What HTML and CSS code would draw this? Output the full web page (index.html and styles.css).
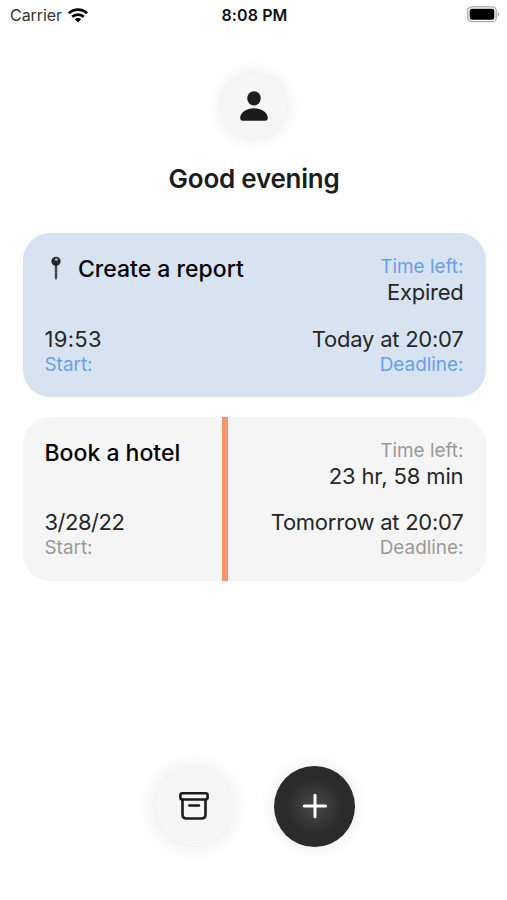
FILE: index.html
```html
<!DOCTYPE html>
<html lang="en">
<head>
<meta charset="utf-8">
<meta name="viewport" content="width=device-width">
<title>Tasks</title>
<link rel="stylesheet" href="styles.css">
</head>
<body>
<main class="screen">
  <header class="status">
    <div class="carrier"><span>Carrier</span>
      <svg width="20" height="15" viewBox="0 0 20 15"><g fill="none" stroke="#000" stroke-width="2.7"><path d="M.9 5.3C6 .4 14 .4 19.1 5.3"/><path d="M4.2 8.8c3.2-3 8.4-3 11.6 0"/></g><path d="M6.8 11.3c1.8-1.6 4.6-1.6 6.4 0L10 14.5Z"/></svg>
    </div>
    <div class="clock">8:08 PM</div>
    <svg class="battery" width="33" height="17" viewBox="0 0 33 17"><rect x=".8" y=".8" width="28.4" height="14.9" rx="4" fill="#fff" stroke="#aaa" stroke-width="1.3"/><rect x="2.7" y="2.8" width="24.6" height="10.9" rx="2.2"/><path d="M30.7 6v4.8q1.5-.7 1.5-2.4T30.7 6Z" fill="#aaa"/></svg>
  </header>
  <div class="avatar">
    <svg width="30" height="30" viewBox="0 0 30 30" fill="#1c1c1c"><ellipse cx="15" cy="7.4" rx="6.7" ry="7.2"/><path d="M1.2 27.1C1.2 21.5 7.5 17.3 15 17.3s13.8 4.2 13.8 9.8q0 2.7-2.8 2.7H4q-2.8 0-2.8-2.7Z"/></svg>
  </div>
  <h1 class="greeting">Good evening</h1>
  <section class="tasks">
    <article class="card card-blue">
      <h2 class="title"><svg class="pin" width="12" height="26" viewBox="0 0 12 26"><path d="M4.8 8h2.4v14L6 24.5 4.8 22Z" fill="#414750"/><circle cx="6" cy="5.3" r="4.6" fill="#20242b"/><circle cx="6.3" cy="3.5" r="1.6" fill="#9ba5b2"/></svg><span>Create a report</span></h2>
      <div class="right"><div class="label">Time left:</div><div class="value">Expired</div></div>
      <div class="row-end"><div class="value v-time">19:53</div><div class="label">Start:</div></div>
      <div class="row-end right"><div class="value">Today at 20:07</div><div class="label">Deadline:</div></div>
    </article>
    <article class="card card-gray">
      <div class="progress"></div>
      <h2 class="title"><span>Book a hotel</span></h2>
      <div class="right"><div class="label">Time left:</div><div class="value v-remain">23 hr, 58 min</div></div>
      <div class="row-end"><div class="value v-date">3/28/22</div><div class="label">Start:</div></div>
      <div class="row-end right"><div class="value">Tomorrow at 20:07</div><div class="label">Deadline:</div></div>
    </article>
  </section>
  <nav class="actions">
    <button class="round light" aria-label="Archive"><svg width="32" height="32" viewBox="0 0 32 32" fill="none" stroke="#1c1c1c" stroke-width="2.6" stroke-linecap="round" stroke-linejoin="round"><rect x="2.4" y="3.3" width="27.2" height="6.2" rx="2"/><path d="M4.5 9.5v15q0 4 4 4h15q4 0 4-4v-15"/><path d="M11.3 15.5h9.6"/></svg></button>
    <button class="round dark" aria-label="Add"><svg width="26" height="26" viewBox="0 0 26 26" fill="none" stroke="#fff" stroke-width="3" stroke-linecap="round"><path d="M13 2.3v21.4M2.3 13h21.4"/></svg></button>
  </nav>
</main>
</body>
</html>
```
FILE: styles.css
```css
* { box-sizing: border-box; }
body { margin: 0; background: #fff; font-family: Inter, "Liberation Sans", sans-serif; color: #1c1c1c; }
.screen { width: 507px; height: 900px; padding-left: 1px; display: flex; flex-direction: column; align-items: center; overflow: hidden; }
.status { width: 100%; height: 30px; padding: 0 7px 0 9px; display: grid; grid-template-columns: 1fr auto 1fr; align-items: center; font-size: 16px; }
.status svg { display: block; }
.carrier { display: flex; align-items: center; gap: 6px; color: #333; letter-spacing: -.05px; }
.clock { font-weight: 600; color: #111; letter-spacing: .1px; margin-left: -1px; }
.battery { justify-self: end; margin-top: -1px; }
.avatar { width: 68px; height: 68px; margin-top: 41.5px; border-radius: 50%; background: #f5f5f5; box-shadow: 0 0 14px 4px #f2f2f2; border: 1px solid #f1f1f1; display: grid; place-items: center; }
.greeting { margin: 22px 0 0; font-size: 26px; line-height: 34px; font-weight: 600; letter-spacing: -.25px; }
.tasks { width: 463px; margin-top: 37.5px; display: flex; flex-direction: column; gap: 19.5px; }
.card { position: relative; height: 164px; padding: 21px 22px 20px; border-radius: 27px; display: grid; grid-template-columns: auto auto; grid-template-rows: 51px 51px; justify-content: space-between; row-gap: 20.5px; overflow: hidden; white-space: nowrap; }
.card-blue { background: #d8e3f1; }
.card-gray { background: #f5f5f5; }
.title { margin: 2px 0 0; display: flex; height: 26px; font-size: 23px; line-height: 26px; font-weight: 500; color: #000; position: relative; }
.pin { margin: 0 16.5px 0 5px; }
.right { text-align: right; position: relative; }
.label { font-size: 18.9px; line-height: 25px; color: #999; }
.card-blue .label { color: #689fed; }
.value { font-size: 22px; line-height: 26px; color: #252729; letter-spacing: -.24px; }
.v-time { letter-spacing: .3px; }
.v-date { letter-spacing: -.5px; }
.v-remain { letter-spacing: -.12px; }
.progress { position: absolute; left: 199.5px; top: 0; width: 6px; height: 100%; background: #f7956a; }
.actions { margin-top: 185px; display: flex; gap: 40px; }
.round { width: 81px; height: 81px; padding: 0; border: 0; border-radius: 50%; display: grid; place-items: center; }
.light { background: #f5f5f5; border: 1px solid #f1f1f1; box-shadow: 0 0 16px 5px #f2f2f2; }
.dark { background: radial-gradient(circle, #484848 0, #2b2b2b 50%); box-shadow: 0 0 14px 5px #f3f3f3; }
```
